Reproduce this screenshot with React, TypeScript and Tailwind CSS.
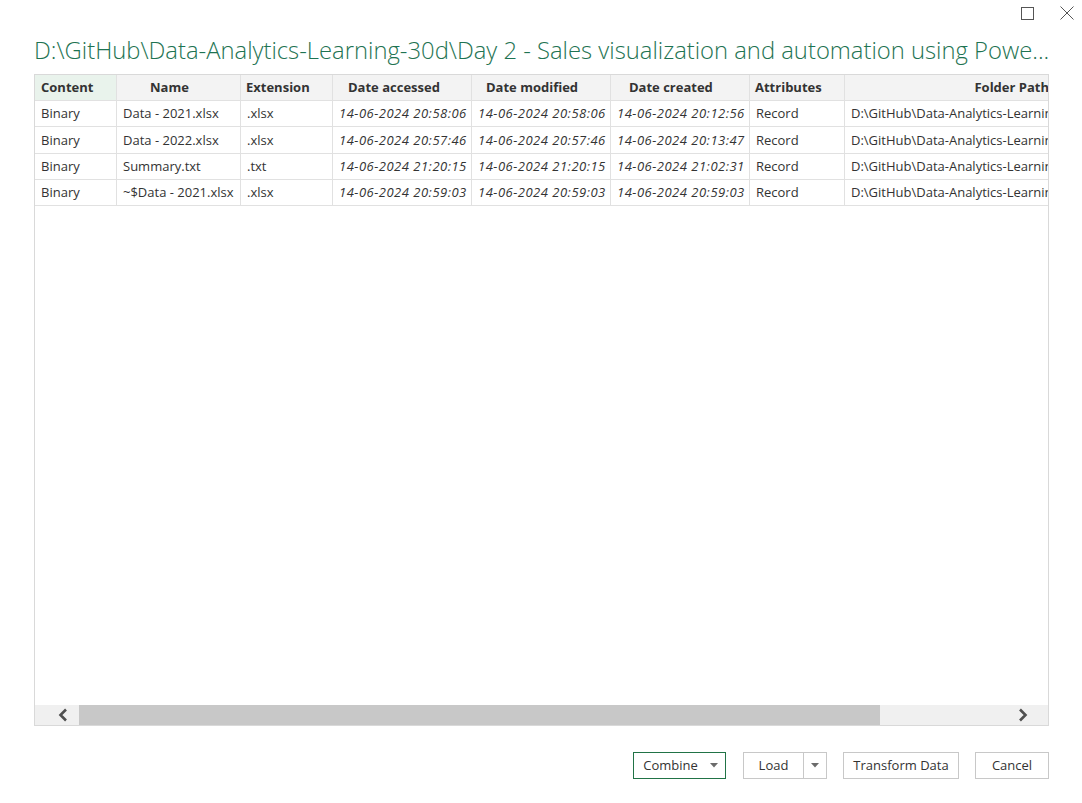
const FONT = "font-['Segoe_UI','Open_Sans','Noto_Sans',sans-serif]";

type Row = {
  content: string;
  name: string;
  ext: string;
  accessed: string;
  modified: string;
  created: string;
  attr: string;
  path: string;
};

const PATH = "D:\\GitHub\\Data-Analytics-Learning-30d\\Day 2 - Sales visualization and automation using Power BI\\";

const rows: Row[] = [
  {
    content: "Binary",
    name: "Data - 2021.xlsx",
    ext: ".xlsx",
    accessed: "14-06-2024 20:58:06",
    modified: "14-06-2024 20:58:06",
    created: "14-06-2024 20:12:56",
    attr: "Record",
    path: PATH,
  },
  {
    content: "Binary",
    name: "Data - 2022.xlsx",
    ext: ".xlsx",
    accessed: "14-06-2024 20:57:46",
    modified: "14-06-2024 20:57:46",
    created: "14-06-2024 20:13:47",
    attr: "Record",
    path: PATH,
  },
  {
    content: "Binary",
    name: "Summary.txt",
    ext: ".txt",
    accessed: "14-06-2024 21:20:15",
    modified: "14-06-2024 21:20:15",
    created: "14-06-2024 21:02:31",
    attr: "Record",
    path: PATH,
  },
  {
    content: "Binary",
    name: "~$Data - 2021.xlsx",
    ext: ".xlsx",
    accessed: "14-06-2024 20:59:03",
    modified: "14-06-2024 20:59:03",
    created: "14-06-2024 20:59:03",
    attr: "Record",
    path: PATH,
  },
];

const GRID = "grid grid-cols-[82px_124px_92px_139px_139px_139px_95px_205px]";

function Caret() {
  return (
    <svg width="8" height="5" viewBox="0 0 8 5">
      <path d="M0 0 L8 0 L4 4.5 Z" fill="#6b6b6b" />
    </svg>
  );
}

export default function App() {
  const cell = "h-[26.33px] flex items-center pt-[1px] px-[6px] whitespace-nowrap overflow-hidden border-r border-b border-[#e1e1e1]";
  const head = "h-[26px] flex items-center whitespace-nowrap overflow-hidden border-r border-b border-[#e1e1e1] font-bold text-[#333]";
  const date = "italic px-[4px] tracking-[0.5px]";

  return (
    <div className={`w-[1082px] h-[803px] bg-white relative ${FONT} text-[#333]`}>
      {/* window controls */}
      <div className="absolute right-[8px] top-[6px] flex items-center gap-[26px]">
        <svg width="13" height="13" viewBox="0 0 13 13">
          <rect x="0.5" y="0.5" width="12" height="12" fill="none" stroke="#555" strokeWidth="1" />
        </svg>
        <svg width="14" height="14" viewBox="0 0 14 14">
          <path d="M0.5 0.5 L13.5 13.5 M13.5 0.5 L0.5 13.5" stroke="#555" strokeWidth="1" />
        </svg>
      </div>

      <div className="flex flex-col pl-[34px] pr-[33px]">
        <h1 className="pt-[33px] h-[74px] text-[23.8px] leading-[34px] font-light text-[#1e7352] whitespace-nowrap">
          D:\GitHub\Data-Analytics-Learning-30d\Day 2 - Sales visualization and automation using Powe...
        </h1>

        <div className="border border-[#d9d9d9] h-[652px] flex flex-col">
          <div className="flex-1 overflow-hidden text-[13px]">
            <div className={GRID}>
              <div className={`${head} pl-[6px] bg-[#e9f3ec]`}>Content</div>
              <div className={`${head} pl-[33px] bg-[#f3f3f3]`}>Name</div>
              <div className={`${head} pl-[5px] bg-[#f3f3f3]`}>Extension</div>
              <div className={`${head} pl-[15px] bg-[#f3f3f3]`}>Date accessed</div>
              <div className={`${head} pl-[14px] bg-[#f3f3f3]`}>Date modified</div>
              <div className={`${head} pl-[18px] bg-[#f3f3f3]`}>Date created</div>
              <div className={`${head} pl-[5px] bg-[#f3f3f3]`}>Attributes</div>
              <div className={`${head} justify-end pr-[1px] bg-[#f3f3f3] border-r-0`}>Folder Path</div>

              {rows.map((r, i) => (
                <div key={i} className="contents">
                  <div className={cell}>{r.content}</div>
                  <div className={cell}>{r.name}</div>
                  <div className={cell}>{r.ext}</div>
                  <div className={`${cell} ${date}`}>{r.accessed}</div>
                  <div className={`${cell} ${date}`}>{r.modified}</div>
                  <div className={`${cell} ${date}`}>{r.created}</div>
                  <div className={cell}>{r.attr}</div>
                  <div className={`${cell} border-r-0`}>{r.path}</div>
                </div>
              ))}
            </div>
          </div>

          {/* horizontal scrollbar */}
          <div className="h-[20px] bg-[#f0f0f0] flex items-center">
            <div className="w-[44px] flex justify-center pl-[12px]">
              <svg width="10" height="14" viewBox="0 0 10 14">
                <path d="M8 1.5 L2.5 7 L8 12.5" fill="none" stroke="#505050" strokeWidth="2.6" />
              </svg>
            </div>
            <div className="w-[801px] h-[20px] bg-[#c8c8c8]" />
            <div className="flex-1 flex justify-end pr-[20px]">
              <svg width="10" height="14" viewBox="0 0 10 14">
                <path d="M2 1.5 L7.5 7 L2 12.5" fill="none" stroke="#505050" strokeWidth="2.6" />
              </svg>
            </div>
          </div>
        </div>

        {/* footer buttons */}
        <div className="flex justify-end gap-[16px] pt-[26px] pr-[0px] text-[13px]">
          <button className="h-[27px] w-[93px] mr-[1px] border border-[#217346] bg-white flex items-center justify-center gap-[12px] pl-[2px]">
            <span>Combine</span>
            <Caret />
          </button>
          <div className="h-[27px] w-[84px] border border-[#c8c8c8] flex">
            <button className="w-[60px] flex items-center justify-center border-r border-[#c8c8c8]">Load</button>
            <button className="flex-1 flex items-center justify-center">
              <Caret />
            </button>
          </div>
          <button className="h-[27px] w-[116px] border border-[#c8c8c8] flex items-center justify-center">
            Transform Data
          </button>
          <button className="h-[27px] w-[74px] border border-[#c8c8c8] flex items-center justify-center">
            Cancel
          </button>
        </div>
      </div>
    </div>
  );
}
